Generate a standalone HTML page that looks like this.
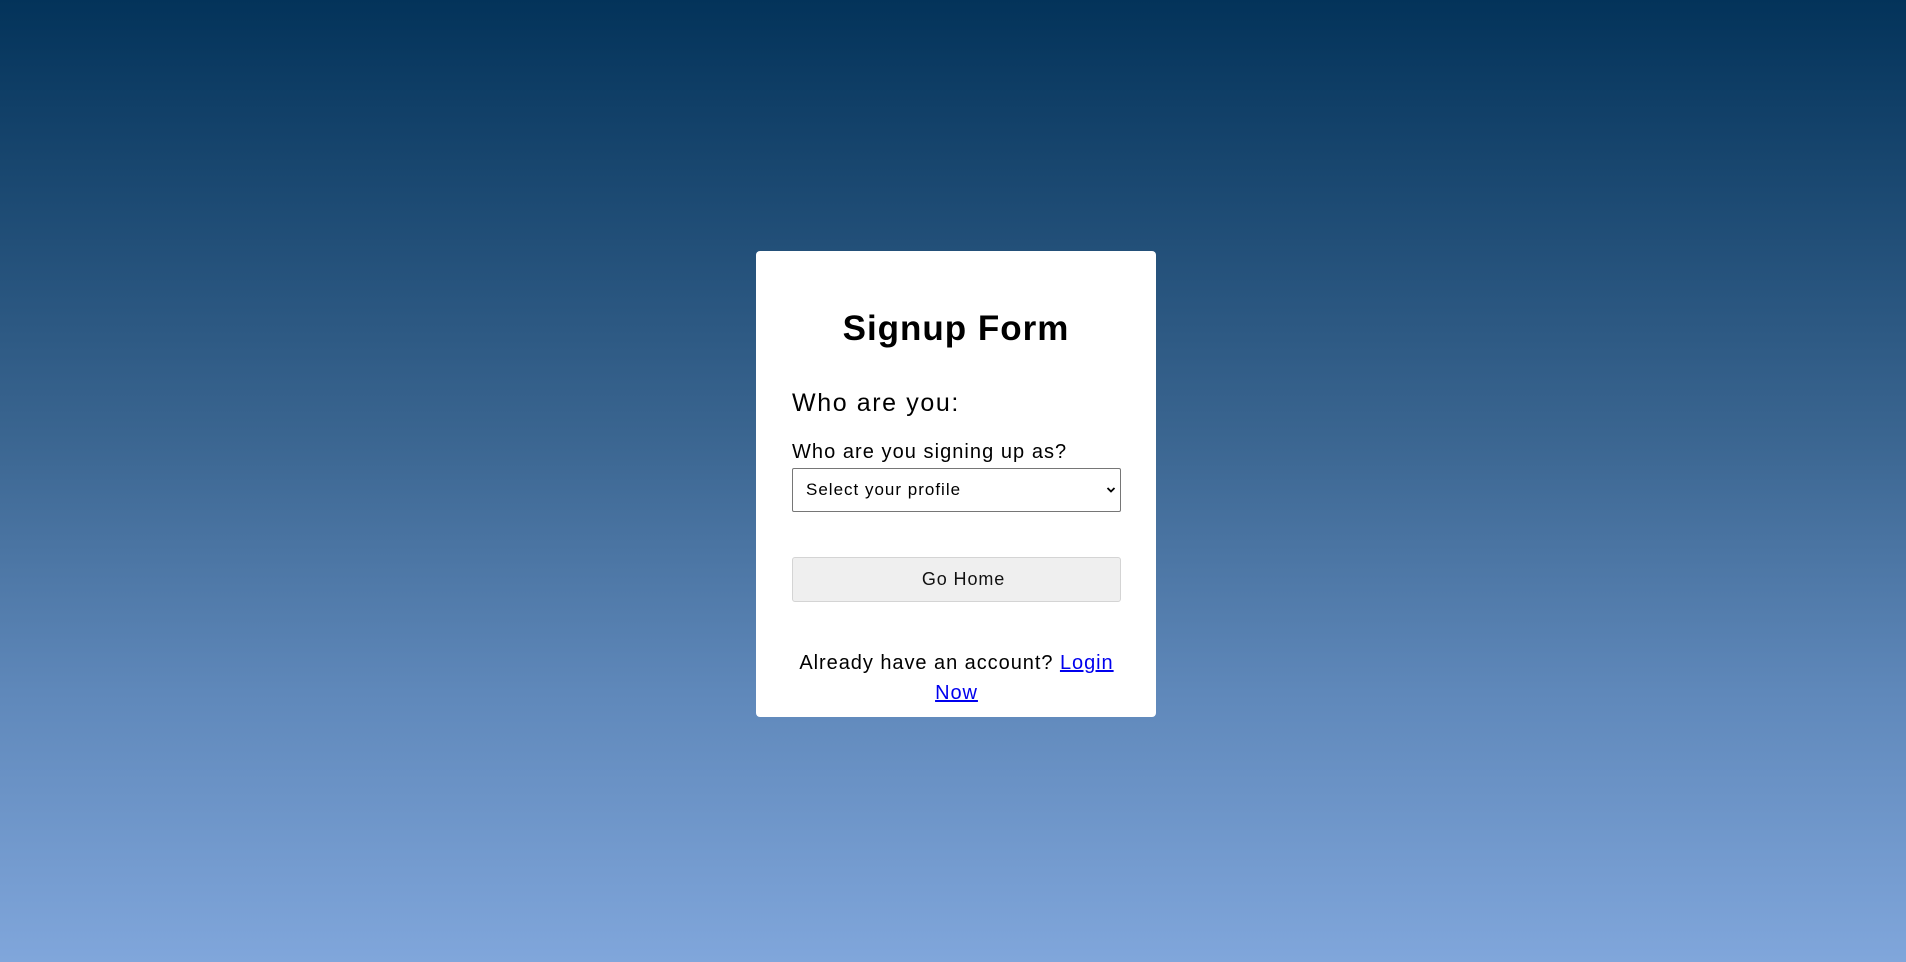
<!DOCTYPE html>
<html><head><meta charset="utf-8"><style>
html,body{margin:0;padding:0;}
body{width:1906px;height:962px;background:linear-gradient(180deg,#03335a 0%,#3a6590 45%,#5f88ba 72%,#80a6db 100%);font-family:"Liberation Sans",sans-serif;position:relative;overflow:hidden;}
.card{position:absolute;left:756px;top:251px;width:400px;height:466px;background:#fff;border-radius:4px;box-sizing:border-box;}
h1{position:absolute;width:400px;margin:0;text-align:center;font-size:35px;font-weight:bold;color:#000;letter-spacing:1px;}
.abs{position:absolute;}
</style></head><body>
<div class="card"></div>
<h1 style="top:309px;left:756px;">Signup Form</h1>
<div class="abs" style="left:792px;top:389px;font-size:25px;letter-spacing:1.6px;color:#000;">Who are you:</div>
<div class="abs" style="left:792px;top:441px;font-size:20px;letter-spacing:1.05px;color:#000;">Who are you signing up as?</div>
<div class="abs" style="left:792px;top:468px;width:329px;height:44px;box-sizing:border-box;border:1px solid #767676;border-radius:2px;background:#fff;">
 <span class="abs" style="left:13px;top:11px;font-size:17px;letter-spacing:1px;color:#000;">Select your profile</span>
 <svg class="abs" style="right:4px;top:17px" width="10" height="8" viewBox="0 0 10 8"><path d="M1.5 2 L5 5.5 L8.5 2" fill="none" stroke="#000" stroke-width="1.8"/></svg>
</div>
<div class="abs" style="left:792px;top:557px;width:329px;height:45px;box-sizing:border-box;border:1px solid #d4d4d4;border-radius:3px;background:#efefef;text-align:center;line-height:43px;font-size:18px;letter-spacing:0.9px;color:#111;padding-left:14px;">Go Home</div>
<div class="abs" style="left:782px;top:648px;width:349px;text-align:center;font-size:20px;line-height:30px;letter-spacing:0.95px;color:#000;">Already have an account? <a style="color:#0000ee;text-decoration:underline;">Login</a><br><a style="color:#0000ee;text-decoration:underline;">Now</a></div>
</body></html>
